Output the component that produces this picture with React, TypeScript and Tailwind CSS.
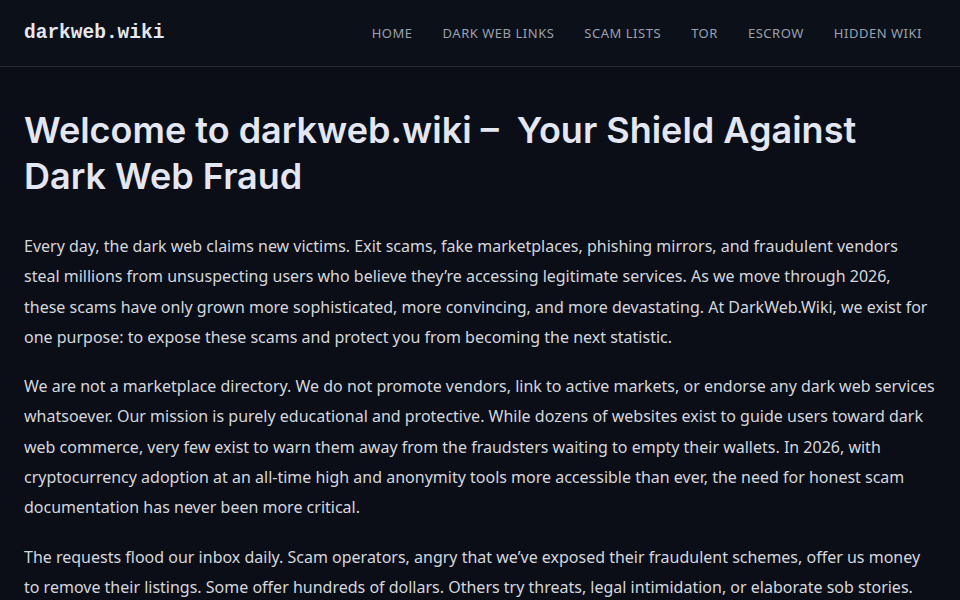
const navItems = ['Home', 'Dark Web Links', 'Scam Lists', 'Tor', 'Escrow', 'Hidden Wiki'];

const paragraphs = [
  'Every day, the dark web claims new victims. Exit scams, fake marketplaces, phishing mirrors, and fraudulent vendors steal millions from unsuspecting users who believe they\u2019re accessing legitimate services. As we move through 2026, these scams have only grown more sophisticated, more convincing, and more devastating. At DarkWeb.Wiki, we exist for one purpose: to expose these scams and protect you from becoming the next statistic.',
  'We are not a marketplace directory. We do not promote vendors, link to active markets, or endorse any dark web services whatsoever. Our mission is purely educational and protective. While dozens of websites exist to guide users toward dark web commerce, very few exist to warn them away from the fraudsters waiting to empty their wallets. In 2026, with cryptocurrency adoption at an all-time high and anonymity tools more accessible than ever, the need for honest scam documentation has never been more critical.',
  'The requests flood our inbox daily. Scam operators, angry that we\u2019ve exposed their fraudulent schemes, offer us money to remove their listings. Some offer hundreds of dollars. Others try threats, legal intimidation, or elaborate sob stories. We refuse every single one of them, because our readers deserve the truth.',
];

export default function App() {
  return (
    <div className="min-h-screen bg-[#0b0e17] text-[#d4d7de] font-['Noto_Sans',sans-serif]">
      <header className="flex h-[67px] items-center justify-between border-b border-[#262b36] bg-[#0c1019] pl-6 pr-[38px] pt-px">
        <a className="font-['Liberation_Mono',monospace] text-[19.5px] font-bold text-[#e4e7ee]">darkweb.wiki</a>
        <nav className="flex items-center gap-[30px]">
          {navItems.map((item) => (
            <a key={item} className="text-[13px] uppercase tracking-[0.52px] text-[#9aa1ae]">
              {item}
            </a>
          ))}
        </nav>
      </header>

      <main className="px-6 pt-[40px]">
        <h1 className="font-['Inter',sans-serif] text-[36px] font-semibold leading-[46px] text-[#e3e6f3]">
          Welcome to darkweb.wiki &ndash;&nbsp; Your Shield Against Dark Web Fraud
        </h1>

        <div className="mt-[32px] flex max-w-[911px] flex-col gap-[19px]">
          {paragraphs.map((p, i) => (
            <p key={i} className="text-[16px] leading-[30.3px]">
              {p}
            </p>
          ))}
        </div>
      </main>
    </div>
  );
}
